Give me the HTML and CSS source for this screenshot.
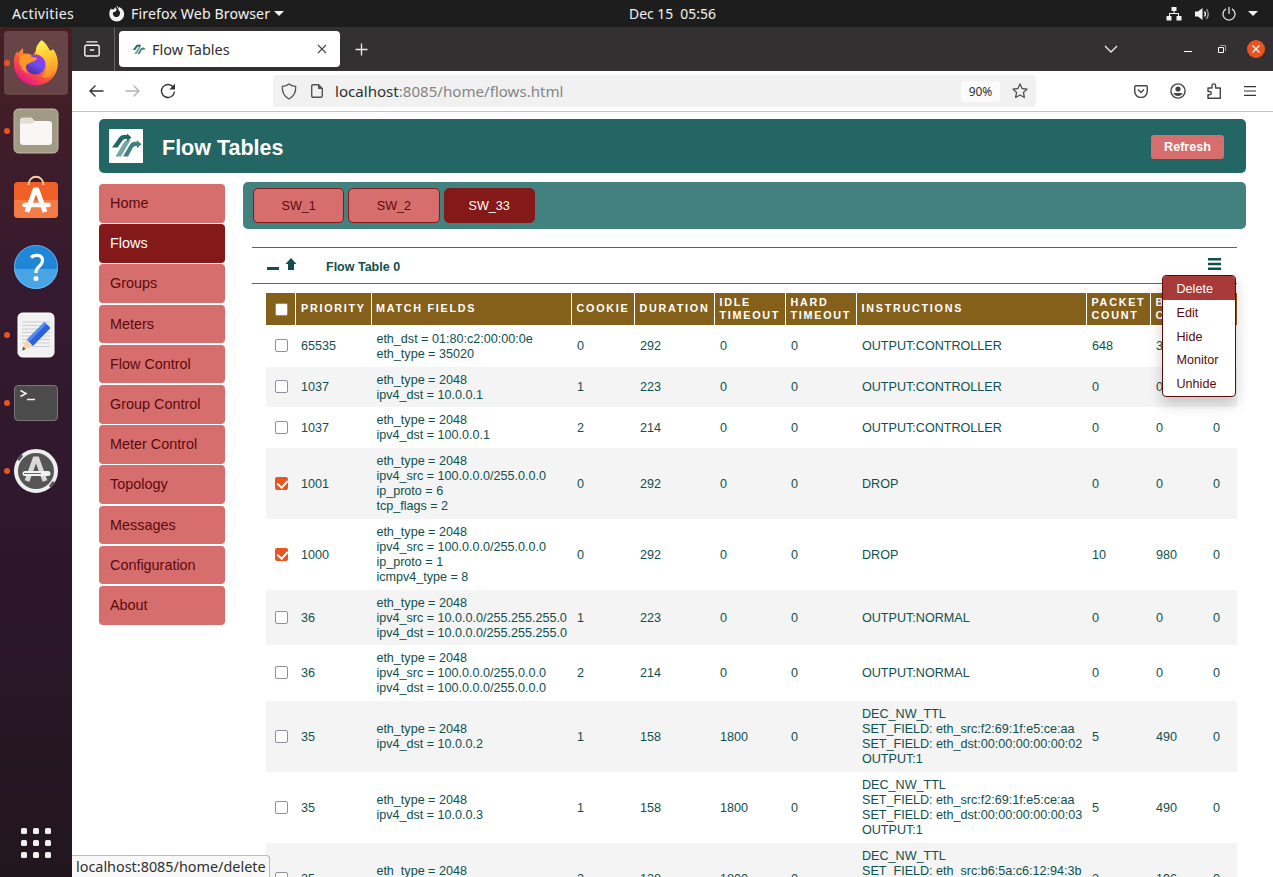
FILE: index.html
```html
<!DOCTYPE html>
<html lang="en">
<head>
<meta charset="utf-8">
<title>Flow Tables</title>
<link rel="stylesheet" href="styles.css">
</head>
<body>
<div class="desktop">
<header class="topbar">
  <span class="top-activities">Activities</span>
  <svg class="top-fox" width="17" height="17" viewBox="0 0 17 17"><path fill="#f2f2f2" d="M8.500.3c.9.8 1.500 1.700 1.700 2.700.5-.2.8-.6 1-1 2.900 1.200 5 3.900 5 7a7.400 7.400 0 0 1-14.900.2C1.300 6.700 2 4.800 3.200 3.300l.6 1.500c.7-.4 1.500-.5 2.300-.4.1-1 .6-1.900 1.300-2.400.1 1.200.7 2 1.600 2.300L7.300 6.700c-.7.300-1.900.2-2.300.9-.6 2.600 1.100 4.500 3.500 4.500s3.700-2.200 3.500-4.300c0-.9-.5-1.800-1.200-2.300C10.600 3.300 8.500 2.700 8.500.3z"/></svg>
  <span class="top-app">Firefox Web Browser</span>
  <i class="tri tri-app"></i>
  <span class="top-date">Dec 15&nbsp; 05:56</span>
  <span class="top-tray">
    <svg width="16" height="14" viewBox="0 0 16 14"><path fill="#f2f2f2" d="M5.500 0h5v4h-2v2H13v3h2.500v4.500h-5V9H12V7H4v2h1.500v4.500h-5V9H3V6h4.500V4h-2z"/></svg>
    <svg width="16" height="14" viewBox="0 0 16 14"><path fill="#f2f2f2" d="M1 4.500h3L8.500 1v12L4 9.500H1z"/><path fill="none" stroke="#f2f2f2" stroke-width="1.300" d="M10.500 4.500q2 2.500 0 5"/><path fill="none" stroke="#a5a5a5" stroke-width="1.300" d="M12.500 2q3.500 5 0 10"/></svg>
    <svg width="14" height="14" viewBox="0 0 14 14"><path fill="none" stroke="#e0e0e0" stroke-width="1.300" d="M4 1.900a6 6 0 1 0 6 0M7 0v7"/></svg>
    <i class="tri tri-tray"></i>
  </span>
</header>
<div class="workspace">
<nav class="dock">
  <div class="dock-item current"><i class="dot"></i>
    <svg width="46" height="48" viewBox="0 0 46 48"><defs>
      <linearGradient id="fx" x1=".85" y1=".05" x2=".25" y2=".95"><stop offset="0" stop-color="#fff44f"/><stop offset=".35" stop-color="#ffb429"/><stop offset=".65" stop-color="#ff5a36"/><stop offset="1" stop-color="#e31587"/></linearGradient>
      <linearGradient id="gl" x1=".8" y1="0" x2=".3" y2="1"><stop offset="0" stop-color="#a431eb"/><stop offset=".5" stop-color="#704cf0"/><stop offset="1" stop-color="#4b2d9e"/></linearGradient>
      <linearGradient id="tl" x1=".4" y1="0" x2=".6" y2="1"><stop offset="0" stop-color="#fff44f"/><stop offset=".5" stop-color="#ffc22f"/><stop offset="1" stop-color="#ff8a2a"/></linearGradient></defs>
      <path fill="url(#fx)" d="M28.500 1c-3 3.500-4.500 6-5 9l15 1.500c1-.5 1.300-.8 1.300-1.500 3 3.500 5 8 5 14.500a22 22 0 0 1-44 0c0-5.500 1-9 3.500-12.500l.5 2.500 5-5.500.5 5.500c4 0 7 0 9.500 2.500z"/>
      <path fill="url(#tl)" d="M28.500 1c4.500 3 7.500 8 9 12.500 1-.7 1.800-2 2-3.500 6 8 6 18 0 25-4 4.500-8.500 4-11 2 5-3.500 5.500-9 4-14-2-5-9-5-9.500-12 0-4 3-7 5.500-10z"/>
      <circle cx="22.500" cy="25.500" r="10" fill="url(#gl)"/>
      <path fill="#ff9629" d="M7 16c5-1.500 9-.5 12 2 2 .5 4 .7 5 1.200-.5 2.800-4.500 3-7 4.500-1.500 1.500-2.700 1.400-3.700 2.300-1.300 4 .2 7 2.700 9-8-3-11-10-9-19z"/>
    </svg></div>
  <div class="dock-item"><i class="dot"></i>
    <svg width="46" height="46" viewBox="0 0 46 46"><rect x="1" y="1" width="44" height="44" rx="4.500" fill="#a19a84" stroke="#c2bba8"/><rect x="7" y="13" width="32" height="24" rx="3" fill="#f8f7f5"/><path d="M7 16v-4q0-2.500 2.500-2.500h9L22 13l-3 2.500H9q-2 0-2 2z" fill="#e1ddd0"/></svg></div>
  <div class="dock-item">
    <svg class="bag" width="46" height="46" viewBox="0 0 46 46"><rect x="1" y="9" width="44" height="36" rx="4" fill="#f05f25"/><path d="M1 27h44v14q0 4-4 4H5q-4 0-4-4z" fill="#f47a46"/><path d="M15.500 12c0-11 15-11 15 0" fill="none" stroke="#f5d0a8" stroke-width="1.800"/><path d="M14 39 22 17h2l8 22" fill="none" stroke="#fff" stroke-width="5"/><path d="M11.500 32h24" stroke="#fff" stroke-width="4.500" stroke-linecap="round"/></svg></div>
  <div class="dock-item"><svg width="46" height="46" viewBox="0 0 46 46"><defs><clipPath id="hc"><circle cx="23" cy="23" r="22"/></clipPath></defs><circle cx="23" cy="23" r="22" fill="#1f86d8"/><path clip-path="url(#hc)" d="M0 25h46v21H0z" fill="#48a4e5"/><circle cx="23" cy="23" r="21.500" fill="none" stroke="#7fbdec" stroke-width=".7"/><path d="M18 13.500c3-3 11.500-3.500 11.500 3 0 5.500-6.500 6-6.500 11.500v1" fill="none" stroke="#fff" stroke-width="3.200"/><circle cx="23" cy="34.500" r="2.500" fill="#fff"/></svg></div>
  <div class="dock-item"><i class="dot"></i>
    <svg width="38" height="46" viewBox="0 0 38 46"><rect x="1" y="1" width="36" height="44" rx="4.500" fill="#f2f2f2" stroke="#fff"/><path d="M5 10h28M5 13.500h28M5 17h28M5 20.500h28M5 24h28M5 27.500h28M5 31h28M5 34.500h28" stroke="#c9c9c9" stroke-width=".9"/><path d="m5 38.500 4.500-11 6 6.500z" fill="#f8d5ac"/><path d="m5 38.500 1.300-3.500 2.400 2z" fill="#444"/><path d="M10 27.500 27.500 10l6 6-17.500 18z" fill="#2b62d9"/><path d="M10 27.500 27.500 10l2 2-17.500 18z" fill="#568cf0"/></svg></div>
  <div class="dock-item"><i class="dot"></i>
    <svg width="46" height="38" viewBox="0 0 46 38"><rect x="1.500" y="1.500" width="43" height="35" rx="3.500" fill="#4b4b4b" stroke="#777"/><path d="m7.500 6.500 5.500 3-5.500 3M14 15.500h8" fill="none" stroke="#f2f2f2" stroke-width="1.500"/></svg></div>
  <div class="dock-item"><i class="dot"></i>
    <svg width="46" height="46" viewBox="0 0 46 46"><circle cx="23" cy="23" r="20" fill="#565656" stroke="#eee" stroke-width="4"/><path d="m5 12 4-5M37 39l4-5" stroke="#555" stroke-width="3"/><path d="M14 33 22 11h2l8 22" fill="none" stroke="#d9d9d9" stroke-width="5"/><path d="M12 25.500h23" stroke="#f2f2f2" stroke-width="5" stroke-linecap="round"/><path d="M11 25.500h17" stroke="#8b4d8f"/></svg></div>
  <div class="apps"><i></i><i></i><i></i><i></i><i></i><i></i><i></i><i></i><i></i></div>
</nav>
<main class="window">
  <div class="tabbar">
    <div class="recent"><svg width="16" height="16" viewBox="0 0 16 16"><path fill="none" stroke="#f4f4f4" stroke-width="1.400" stroke-linecap="round" d="M3 .9h10M2.400 4.200h11.200q1.600 0 1.600 1.600v7.600q0 1.600-1.600 1.600H2.400Q.8 15 .8 13.400V5.800q0-1.600 1.600-1.600zM6.300 9h3.400"/></svg></div>
    <div class="tab">
      <svg width="14" height="12" viewBox="1 4 33 24"><use href="#flow"/></svg>
      <span class="tab-name">Flow Tables</span>
      <svg class="tab-x" width="10" height="10" viewBox="0 0 10 10"><path stroke="#444" stroke-width="1.100" d="m1 1 8 8M9 1 1 9"/></svg>
    </div>
    <svg class="plus" width="13" height="13" viewBox="0 0 13 13"><path stroke="#eee" stroke-width="1.300" d="M.5 6.500h12M6.500.5v12"/></svg>
    <div class="wincontrols">
      <svg class="w-list" width="14" height="8" viewBox="0 0 14 8"><path fill="none" stroke="#eee" stroke-width="1.300" d="m1 1 6 6 6-6"/></svg>
      <i class="w-min"></i>
      <svg class="w-max" width="8" height="8" viewBox="0 0 8 8"><path fill="none" stroke="#999" d="M2 .5h5.500V6"/><path fill="none" stroke="#fff" d="M.5 2.500h5v5h-5z"/></svg>
      <span class="w-close"><svg width="8" height="8" viewBox="0 0 8 8"><path stroke="#fff" stroke-width="1.300" d="m.5.500 7 7M7.500.500l-7 7"/></svg></span>
    </div>
  </div>
  <div class="toolbar">
    <svg width="15" height="12" viewBox="0 0 15 12"><path fill="none" stroke="#333" stroke-width="1.400" d="M14.500 6H1M6.500.5 1 6l5.500 5.500"/></svg>
    <svg class="n-fwd" width="15" height="12" viewBox="0 0 15 12"><path fill="none" stroke="#b5b5b5" stroke-width="1.400" d="M.5 6H14M8.500.5 14 6l-5.500 5.500"/></svg>
    <svg class="n-load" width="16" height="16" viewBox="0 0 16 16"><path fill="none" stroke="#333" stroke-width="1.400" d="M13.500 4.500A6.500 6.500 0 1 0 14.500 8.500"/><path fill="#333" d="M15 .8V6.500H9.300z"/></svg>
    <div class="urlbar">
      <svg width="16" height="17" viewBox="0 0 16 17"><path fill="none" stroke="#555" stroke-width="1.300" stroke-linejoin="round" d="M8 .9Q10.500 3 14.700 3.300C15 9 13 13.500 8 16 3 13.500 1 9 1.300 3.300 5.500 3 8 .9 8 .9z"/></svg>
      <svg width="12" height="14" viewBox="0 0 12 14"><path fill="none" stroke="#555" stroke-width="1.400" d="M2.200.7h5.300L11.300 4.500v7.300q0 1.500-1.500 1.500H2.200Q.7 13.300.7 11.800V2.200Q.7.7 2.200.7z"/><path fill="#555" d="M7 0v5h5z"/></svg>
      <span class="url">localhost<span>:8085/home/flows.html</span></span>
      <span class="zoomlevel">90%</span>
      <svg width="16" height="16" viewBox="0 0 16 16"><path fill="none" stroke="#555" stroke-width="1.300" stroke-linejoin="round" d="m8 .9 2.100 4.600 5 .6-3.700 3.400 1 5L8 12l-4.400 2.500 1-5L.9 6.100l5-.6z"/></svg>
    </div>
    <div class="actions">
      <svg width="14" height="13" viewBox="0 0 14 13"><path fill="none" stroke="#444" stroke-width="1.400" stroke-linejoin="round" d="M2 .7h10q1.300 0 1.300 1.300v4.200a6.300 6.300 0 0 1-12.600 0V2Q.7.700 2 .7z"/><path fill="none" stroke="#444" stroke-width="1.400" d="M4 4.500 7 7.500l3-3"/></svg>
      <svg width="16" height="16" viewBox="0 0 16 16"><circle cx="8" cy="8" r="7.100" fill="none" stroke="#444" stroke-width="1.400"/><circle cx="8" cy="6" r="2.600" fill="#444"/><path fill="#444" d="M3.500 10h9q-1 3-4.500 3t-4.500-3z"/></svg>
      <svg width="14" height="16" viewBox="0 0 14 16"><path fill="none" stroke="#444" stroke-width="1.400" stroke-linejoin="round" d="M1 5h4V2.500q0-1.600 1.800-1.600T8.600 2.500V5h4.700v10.300H1v-3.600h1.700q1.600 0 1.600-1.600T2.700 8.500H1z"/></svg>
      <svg class="app-menu" width="12" height="10" viewBox="0 0 12 10"><path stroke="#333" stroke-width="1.200" d="M0 .6h12M0 5h12M0 9.400h12"/></svg>
    </div>
  </div>
  <div class="page">
    <div class="banner">
      <div class="logo"><svg width="34" height="34" viewBox="0 0 34 34"><g id="flow"><path fill="#76a5a3" d="M6.500 27.500 14.500 14q1.500-3 4.500-3h2.500L12 27.500z"/><path fill="#236663" d="M3 18.500 10.500 8q1.500-2 4-2h3.500V4.500l4.500 4-4.500 4V10h-2q-1.500 0-2.500 1.500L8.500 18.500z"/><path fill="#42817e" d="M14 27.500 21 15.500q1.500-2.700 4-2.700h3v-1.500l4.500 4-4.500 4V17h-1.500q-1.500 0-2.500 1.500L19 27.500z"/></g></svg></div>
      <h1>Flow Tables</h1>
      <button class="refresh">Refresh</button>
    </div>
    <div class="columns">
      <nav class="side">
        <a>Home</a><a class="on">Flows</a><a>Groups</a><a>Meters</a><a>Flow Control</a><a>Group Control</a><a>Meter Control</a><a>Topology</a><a>Messages</a><a>Configuration</a><a>About</a>
      </nav>
      <section class="content">
        <div class="switches"><button>SW_1</button><button>SW_2</button><button class="on">SW_33</button></div>
        <div class="tablebar">
          <i class="minus"></i>
          <svg class="up" width="12" height="12" viewBox="0 0 12 12"><path fill="#0f504e" d="m6 0 5.500 6H9v6H3V6H.5z"/></svg>
          <b>Flow Table 0</b>
          <svg class="burger" width="13" height="12" viewBox="0 0 13 12"><path stroke="#0f504e" stroke-width="2.400" d="M0 1.200h13M0 6h13M0 10.800h13"/></svg>
          <ul class="menu"><li class="hot">Delete</li><li>Edit</li><li>Hide</li><li>Monitor</li><li>Unhide</li></ul>
        </div>
        <table>
          <colgroup><col class="c0"><col class="c1"><col class="c2"><col class="c3"><col class="c4"><col class="c5"><col class="c6"><col class="c7"><col class="c8"><col class="c9"><col class="c10"></colgroup>
          <thead><tr><th><input type="checkbox"></th><th>PRIORITY</th><th>MATCH FIELDS</th><th>COOKIE</th><th>DURATION</th><th>IDLE<br>TIMEOUT</th><th>HARD<br>TIMEOUT</th><th>INSTRUCTIONS</th><th>PACKET<br>COUNT</th><th>BYTE<br>COUNT</th><th></th></tr></thead>
          <tbody>
          <tr class="h42"><td><input type="checkbox"></td><td>65535</td><td>eth_dst = 01:80:c2:00:00:0e<br>eth_type = 35020</td><td>0</td><td>292</td><td>0</td><td>0</td><td>OUTPUT:CONTROLLER</td><td>648</td><td>38880</td><td>0</td></tr>
          <tr class="h40"><td><input type="checkbox"></td><td>1037</td><td>eth_type = 2048<br>ipv4_dst = 10.0.0.1</td><td>1</td><td>223</td><td>0</td><td>0</td><td>OUTPUT:CONTROLLER</td><td>0</td><td>0</td><td>0</td></tr>
          <tr class="h41"><td><input type="checkbox"></td><td>1037</td><td>eth_type = 2048<br>ipv4_dst = 100.0.0.1</td><td>2</td><td>214</td><td>0</td><td>0</td><td>OUTPUT:CONTROLLER</td><td>0</td><td>0</td><td>0</td></tr>
          <tr class="h71"><td><input type="checkbox" checked></td><td>1001</td><td>eth_type = 2048<br>ipv4_src = 100.0.0.0/255.0.0.0<br>ip_proto = 6<br>tcp_flags = 2</td><td>0</td><td>292</td><td>0</td><td>0</td><td>DROP</td><td>0</td><td>0</td><td>0</td></tr>
          <tr class="h71"><td><input type="checkbox" checked></td><td>1000</td><td>eth_type = 2048<br>ipv4_src = 100.0.0.0/255.0.0.0<br>ip_proto = 1<br>icmpv4_type = 8</td><td>0</td><td>292</td><td>0</td><td>0</td><td>DROP</td><td>10</td><td>980</td><td>0</td></tr>
          <tr class="h55"><td><input type="checkbox"></td><td>36</td><td>eth_type = 2048<br>ipv4_src = 10.0.0.0/255.255.255.0<br>ipv4_dst = 10.0.0.0/255.255.255.0</td><td>1</td><td>223</td><td>0</td><td>0</td><td>OUTPUT:NORMAL</td><td>0</td><td>0</td><td>0</td></tr>
          <tr class="h56"><td><input type="checkbox"></td><td>36</td><td>eth_type = 2048<br>ipv4_src = 100.0.0.0/255.0.0.0<br>ipv4_dst = 100.0.0.0/255.0.0.0</td><td>2</td><td>214</td><td>0</td><td>0</td><td>OUTPUT:NORMAL</td><td>0</td><td>0</td><td>0</td></tr>
          <tr class="h71"><td><input type="checkbox"></td><td>35</td><td>eth_type = 2048<br>ipv4_dst = 10.0.0.2</td><td>1</td><td>158</td><td>1800</td><td>0</td><td>DEC_NW_TTL<br>SET_FIELD: eth_src:f2:69:1f:e5:ce:aa<br>SET_FIELD: eth_dst:00:00:00:00:00:02<br>OUTPUT:1</td><td>5</td><td>490</td><td>0</td></tr>
          <tr class="h71"><td><input type="checkbox"></td><td>35</td><td>eth_type = 2048<br>ipv4_dst = 10.0.0.3</td><td>1</td><td>158</td><td>1800</td><td>0</td><td>DEC_NW_TTL<br>SET_FIELD: eth_src:f2:69:1f:e5:ce:aa<br>SET_FIELD: eth_dst:00:00:00:00:00:03<br>OUTPUT:1</td><td>5</td><td>490</td><td>0</td></tr>
          <tr class="h71"><td><input type="checkbox"></td><td>35</td><td>eth_type = 2048<br>ipv4_dst = 100.0.0.2</td><td>2</td><td>138</td><td>1800</td><td>0</td><td>DEC_NW_TTL<br>SET_FIELD: eth_src:b6:5a:c6:12:94:3b<br>SET_FIELD: eth_dst:00:00:00:00:00:02<br>OUTPUT:2</td><td>2</td><td>196</td><td>0</td></tr>
          </tbody>
        </table>
      </section>
    </div>
    <div class="status">localhost:8085/home/delete</div>
  </div>
</main>
</div>
</div>
</body>
</html>
```
FILE: styles.css
```css
* { box-sizing: border-box; }
body { margin: 0; font-family: "Liberation Sans", Arial, sans-serif; font-size: 12.6px; color: #0f504e; background: #fff; overflow: hidden; }
svg { display: block; flex: none; }
button { font-family: inherit; cursor: pointer; }
.desktop { width: 1273px; height: 877px; display: flex; flex-direction: column; overflow: hidden; }

/* System bar */
.topbar { flex: none; height: 27px; background: #1d1d1d; color: #f2f2f2; display: grid; grid-template-columns: 96px 23px auto auto 1fr auto; align-items: center; padding: 0 15px 0 12px; font: 14.2px/27px "Noto Sans", sans-serif; position: relative; white-space: nowrap; }
.top-activities { letter-spacing: .3px; }
.top-app { letter-spacing: .1px; }
.tri { display: block; border: 5px solid transparent; border-top-color: #f2f2f2; border-bottom: 0; }
.tri-app { margin-left: 4px; }
.top-date { position: absolute; left: 629px; top: 0; font-size: 13.9px; }
.top-tray { grid-column: 6; display: flex; align-items: center; gap: 12px; }

/* Dock */
.workspace { flex: 1; min-height: 0; display: flex; }
.dock { flex: none; width: 72px; background: linear-gradient(#471f23, #351a2f 30%, #2d162c 65%, #21161e); padding: 4px 4px 17px; display: flex; flex-direction: column; gap: 4px; }
.dock-item { flex: none; height: 64px; border-radius: 4px; display: flex; align-items: center; justify-content: center; position: relative; }
.current { background: #674547; }
.bag { margin-bottom: 7px; }
.dot { position: absolute; left: 0; top: 29px; width: 6px; height: 6px; border-radius: 50%; background: #e95420; }
.apps { margin: auto auto 0; display: grid; grid-template-columns: repeat(3, 6px); gap: 6px; padding-bottom: 2px; }
.apps i { height: 6px; background: #f2f0ec; border-radius: 1.5px; }

/* Browser chrome */
.window { flex: 1; min-width: 0; display: flex; flex-direction: column; font-family: "Noto Sans", sans-serif; }
.tabbar { flex: none; height: 44px; background: #323031; display: flex; align-items: center; }
.recent { width: 43px; height: 44px; border-right: 1px solid #656364; display: flex; align-items: center; padding-left: 12px; }
.tab { width: 221px; height: 36px; margin-left: 4px; border-radius: 4px; background: #fff; color: #303030; display: flex; align-items: center; padding: 0 13px; font-size: 14.5px; }
.tab-name { margin-left: 6px; flex: 1; }
.plus { margin-left: 15px; }
.wincontrols { margin-left: auto; display: flex; align-items: center; padding-right: 8px; }
.w-list { margin-right: 66px; }
.w-min { width: 8px; height: 1px; background: #fff; margin: 5px 26px 0 0; }
.w-max { margin-right: 21px; }
.w-close { width: 18px; height: 18px; border-radius: 50%; background: #e95420; display: flex; align-items: center; justify-content: center; }
.toolbar { flex: none; height: 41px; border-bottom: 1px solid #c4c4c4; background: #fff; display: flex; align-items: center; padding-left: 17px; }
.n-fwd { margin-left: 21px; }
.n-load { margin-left: 20px; }
.urlbar { margin-left: 97px; width: 763px; height: 32px; border-radius: 4px; background: #f1f1f1; display: flex; align-items: center; padding: 0 8px; }
.urlbar > svg:nth-child(2) { margin-left: 14px; }
.url { flex: 1; margin-left: 12px; font-size: 15.1px; color: #303030; }
.url span { color: #858585; }
.zoomlevel { width: 39px; height: 21px; line-height: 21px; margin-right: 12px; text-align: center; font-size: 12px; color: #303030; border-radius: 3px; background: #fbfbfb; }
.actions { display: flex; align-items: center; gap: 21.500px; margin-left: 98px; }
.app-menu { margin-left: 1px; }

/* Page */
.page { flex: 1; min-height: 0; overflow: hidden; position: relative; padding: 7px 27px 0; font-family: "Liberation Sans", Arial, sans-serif; }
.banner { height: 54px; border-radius: 5px; background: #236663; display: flex; align-items: center; padding: 0 22px 0 10px; }
.logo { width: 34px; height: 34px; background: #fff; border-radius: 1px; }
.banner h1 { margin: 3px 0 0 19px; flex: 1; color: #fff; font-size: 21.500px; line-height: 26px; }
.refresh { width: 73px; height: 24px; margin-top: 2px; border: 0; border-radius: 3px; padding: 0; background: #d66e6e; color: #fff; font-size: 12.6px; font-weight: bold; }
.columns { display: flex; gap: 18px; padding-top: 9px; }
.side { width: 126px; flex: none; padding-top: 2px; display: flex; flex-direction: column; gap: 1.500px; }
.side a { height: 38.700px; padding-left: 11px; line-height: 38px; border-radius: 4px; background: #d66e6e; color: #5c0a0a; font-size: 14.4px; }
.side .on, .switches .on { background: #841919; color: #fff; }
.content { flex: 1; min-width: 0; }
.switches { height: 47px; border-radius: 5px; background: #42817e; display: flex; gap: 4px; padding: 6px 10px; }
.switches button { width: 91.300px; height: 35px; border: 1px solid #841919; border-radius: 5px; background: #d66e6e; color: #5c0a0a; font-size: 12.6px; padding: 0; }
.tablebar { height: 37px; margin: 18px 9px 0; border: solid #85601b; border-width: 1px 0; display: flex; align-items: center; position: relative; padding: 0 16px 0 15px; }
.minus { width: 12px; height: 3px; background: #0f504e; margin-top: 6px; }
.up { margin: 0 29px 3px 6px; }
.tablebar b { flex: 1; padding-top: 2px; font-size: 12.500px; }
.burger { margin-bottom: 3px; }
.menu { position: absolute; z-index: 2; left: 910px; top: 27px; width: 74px; height: 122px; margin: 0; padding: 0; list-style: none; border: 1px solid #5c0a0a; border-radius: 4px; background: #fff; color: #5c0a0a; box-shadow: 0 7px 14px rgba(0,0,0,.2); overflow: hidden; }
.menu li { height: 23.700px; line-height: 26px; padding-left: 13.500px; }
.menu .hot { height: 24px; background: #a93a3a; color: #fff; }

/* Flow entries */
table { width: 971px; margin: 9px 0 0 23px; table-layout: fixed; border-collapse: separate; border-spacing: 0; }
.c0 { width: 30px; } .c1 { width: 76px; } .c2 { width: 200px; } .c3 { width: 63px; } .c4 { width: 80px; } .c5 { width: 71px; } .c6 { width: 71px; } .c7 { width: 230px; } .c8 { width: 64px; } .c9 { width: 57px; } .c10 { width: 29px; }
th { height: 32px; padding: 0 0 1px 4.500px; background: #85601b; border-right: 1px solid #fff; color: #fff; text-align: left; font-size: 10.8px; line-height: 13px; letter-spacing: 1.720px; white-space: nowrap; }
th:last-child { border-right: 0; }
td { padding: 1px 0 0 5px; line-height: 15px; letter-spacing: -.01px; white-space: nowrap; }
th:nth-child(2) { padding-left: 5px; }
th:nth-child(3) { padding-left: 4px; }
td:nth-child(3) { padding-left: 4.400px; }
td:first-child, th:first-child { padding: 0 0 0 9px; }
tbody tr:nth-child(even) { background: #f4f4f4; }
.h40 { height: 40px; } .h41 { height: 41px; } .h42 { height: 42px; } .h55 { height: 55px; } .h56 { height: 56px; } .h71 { height: 71px; }
input { appearance: none; display: block; width: 13px; height: 13px; margin: 0; border: 1px solid #8f8f9d; border-radius: 2px; background: #fff; }
td input { margin-top: -1px; }
input:checked { border-color: #e95420; background: #e95420; }
input:checked::after { content: ""; display: block; width: 5px; height: 8px; margin: 0 0 0 3px; border: solid #fff; border-width: 0 2px 2px 0; transform: rotate(42deg); }
.status { position: absolute; z-index: 3; left: 0; bottom: 0; width: 198px; height: 22px; padding-left: 4px; line-height: 21px; border: solid #bbb; border-width: 1px 1px 0 0; border-radius: 0 4px 0 0; background: #f8f8f8; color: #303030; font-family: "Noto Sans", sans-serif; font-size: 14.400px; white-space: nowrap; }
```
